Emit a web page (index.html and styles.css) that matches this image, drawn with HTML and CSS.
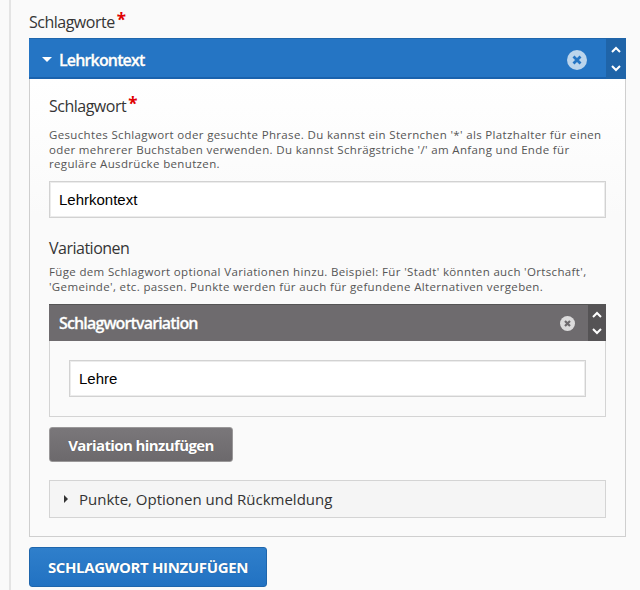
FILE: index.html
```html
<!DOCTYPE html>
<html lang="de">
<head>
<meta charset="utf-8">
<title>Schlagworte</title>
<link rel="stylesheet" href="styles.css">
</head>
<body>
<main class="page">
  <div class="label group-label">Schlagworte<span class="req">*</span></div>
  <section class="group">
    <header class="bar bar-blue">
      <span class="caret-down"></span>
      <span class="bar-title">Lehrkontext</span>
      <svg class="remove" width="20" height="20" viewBox="0 0 20 20"><circle cx="10" cy="10" r="10" fill="#bcd5ec"/><path d="M6.5 6.5l7 7M13.5 6.5l-7 7" stroke="#2575c4" stroke-width="2.8"/></svg>
      <div class="order order-blue">
        <svg width="12" height="8" viewBox="0 0 12 8"><path d="M2 6l4-4 4 4" fill="none" stroke="#fff" stroke-width="2"/></svg>
        <svg width="12" height="8" viewBox="0 0 12 8"><path d="M2 2l4 4 4-4" fill="none" stroke="#fff" stroke-width="2"/></svg>
      </div>
    </header>
    <div class="group-body">
      <div class="label field-label">Schlagwort<span class="req">*</span></div>
      <p class="desc desc-first">Gesuchtes Schlagwort oder gesuchte Phrase. Du kannst ein Sternchen '*' als Platzhalter für einen<br>oder mehrerer Buchstaben verwenden. Du kannst Schrägstriche '/' am Anfang und Ende für<br>reguläre Ausdrücke benutzen.</p>
      <input class="input input-first" type="text" value="Lehrkontext">
      <div class="label sub-label">Variationen</div>
      <p class="desc">Füge dem Schlagwort optional Variationen hinzu. Beispiel: Für 'Stadt' könnten auch 'Ortschaft',<br>'Gemeinde', etc. passen. Punkte werden für auch für gefundene Alternativen vergeben.</p>
      <section class="variation">
        <header class="bar bar-grey">
          <span class="bar-title">Schlagwortvariation</span>
          <svg class="remove remove-small" width="15" height="15" viewBox="0 0 15 15"><circle cx="7.5" cy="7.5" r="7.5" fill="#dcdbdc"/><path d="M5 5l5 5M10 5l-5 5" stroke="#6e6b6e" stroke-width="2.2"/></svg>
          <div class="order order-grey">
            <svg width="12" height="8" viewBox="0 0 12 8"><path d="M2 6l4-4 4 4" fill="none" stroke="#fff" stroke-width="2"/></svg>
            <svg width="12" height="8" viewBox="0 0 12 8"><path d="M2 2l4 4 4-4" fill="none" stroke="#fff" stroke-width="2"/></svg>
          </div>
        </header>
        <div class="variation-body">
          <input class="input" type="text" value="Lehre">
        </div>
      </section>
      <button class="btn btn-grey" type="button">Variation hinzufügen</button>
      <div class="collapsed">
        <span class="caret-right"></span>
        <span>Punkte, Optionen und Rückmeldung</span>
      </div>
    </div>
  </section>
  <button class="btn btn-blue" type="button">SCHLAGWORT HINZUFÜGEN</button>
</main>
</body>
</html>
```

FILE: styles.css
```css
* { box-sizing: border-box; }
html, body { margin: 0; padding: 0; }
body {
  background: #fafafa;
  font-family: "Open Sans", sans-serif;
  color: #353535;
  height: 590px;
  overflow: hidden;
}
.page {
  margin-left: 9px;
  width: 617px;
  height: 590px;
  padding: 11px 0 0 18px;
  border-left: 2px solid #e4e4e4;
}
.label { font-size: 16px; line-height: 22px; letter-spacing: -0.5px; }
.group-label { height: 27px; }
.req {
  color: #e00000;
  font-weight: 700;
  font-size: 17px;
  line-height: 16px;
  margin-left: 2px;
  vertical-align: 2px;
}
.group { width: 597px; }
.bar {
  display: flex;
  align-items: center;
  color: #fff;
  font-weight: 600;
  font-size: 16px;
  letter-spacing: -0.85px;
  -webkit-text-stroke: 0.3px #fff;
  text-shadow: 0 0 1px rgba(0,0,0,.3);
}
.bar-blue {
  height: 41px;
  background: #2575c4;
  border-top: 1px solid #1f66ac;
  border-bottom: 2px solid #1a62ad;
  padding: 3px 0 0 13px;
}
.bar-grey {
  height: 37px;
  background: #6e6b6e;
  border-top: 1px solid #555;
  padding-left: 10px;
}
.caret-down {
  width: 0; height: 0;
  border-left: 5px solid transparent;
  border-right: 5px solid transparent;
  border-top: 5px solid #fff;
  margin-right: 7px;
}
.bar-title { flex: 1; }
.remove { flex: none; margin-right: 19px; }
.remove-small { margin-right: 13px; }
.order {
  align-self: stretch;
  width: 20px;
  display: flex;
  flex-direction: column;
  align-items: center;
  justify-content: space-between;
}
.order-blue { background: #1f64a8; padding: 8px 0 7px; margin: -4px 0 -2px; height: 41px; }
.order-grey { background: #555355; padding: 6px 0 6px; width: 18px; }
.group-body {
  height: 458px;
  padding: 16px 19px 0;
  border: 1px solid #cfcfcf;
  border-top: 0;
  background: linear-gradient(#fff, #fafafa 30%);
}
.field-label { height: 22px; }
.desc {
  margin: 6px 0 0;
  font-size: 11.5px;
  line-height: 14.5px;
  letter-spacing: 0.35px;
  color: #555;
}
.desc-first { margin-top: 11px; }
.input {
  display: block;
  width: 100%;
  height: 37px;
  padding: 0 9px;
  border: 1px solid #d2d2d2;
  box-shadow: inset 0 0 0 1px #ececec;
  background: #fff;
  font-family: "Liberation Sans", Arial, sans-serif;
  font-size: 15px;
  color: #000;
  outline: 0;
  margin-top: 10.5px;
}
.input-first { margin-top: 9.5px; }
.sub-label { margin-top: 19px; height: 22px; }
.variation { margin-top: 10px; }
.variation-body {
  height: 76px;
  padding: 8px 19px 0;
  border: 1px solid #d4d4d4;
  border-top: 0;
}
.btn {
  display: block;
  font-family: "Open Sans", sans-serif;
  font-weight: 700;
  font-size: 15px;
  letter-spacing: -0.6px;
  color: #fff;
  border-radius: 3px;
  text-shadow: 0 0 1px rgba(0,0,0,.3);
  padding: 0;
}
.btn-grey {
  width: 184px;
  height: 35px;
  margin-top: 10px;
  border: 1px solid #9a9899;
  background: linear-gradient(#7a777a, #6c696c);
}
.btn-blue {
  width: 238px;
  height: 40px;
  margin-top: 10px;
  border: 1px solid #1f66ac;
  letter-spacing: -0.35px;
  background: linear-gradient(#2f7fcb, #2272c2);
}
.collapsed {
  display: flex;
  align-items: center;
  height: 38px;
  margin-top: 18px;
  padding-left: 14px;
  background: #f5f5f5;
  border: 1px solid #d4d4d4;
  font-size: 15px;
  color: #333;
}
.caret-right {
  width: 0; height: 0;
  border-top: 4px solid transparent;
  border-bottom: 4px solid transparent;
  border-left: 4px solid #333;
  margin-right: 11px;
}
```
